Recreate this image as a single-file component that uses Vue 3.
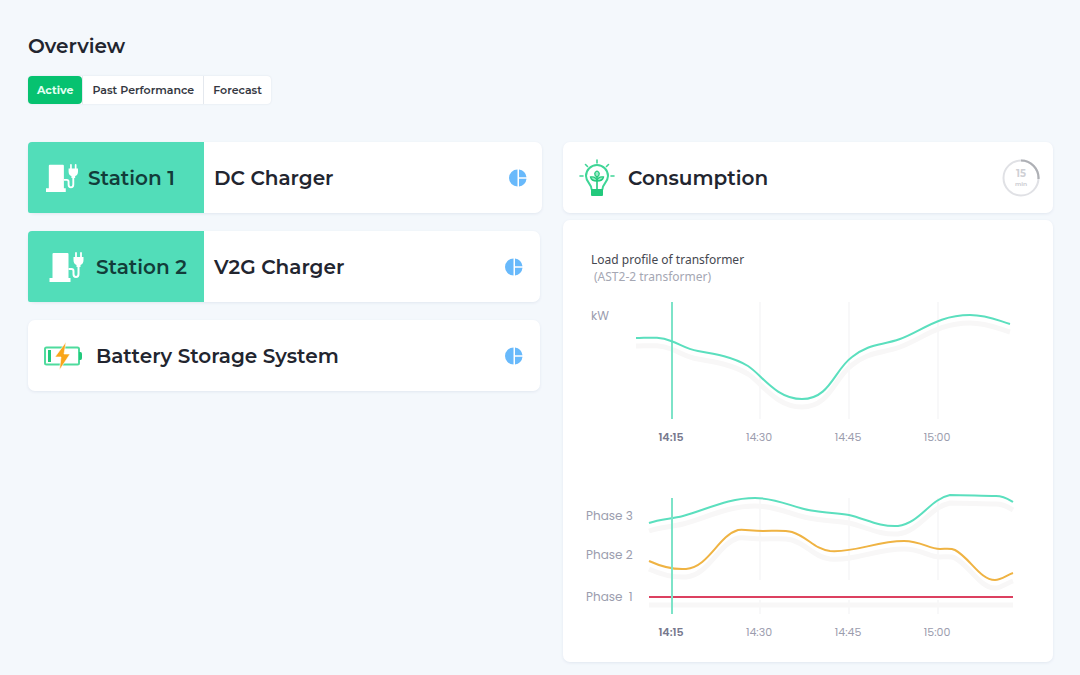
<script setup>
import { ref } from 'vue'

const tabs = ['Active', 'Past Performance', 'Forecast']
const activeTab = ref('Active')

const stations = [
  { tag: 'Station 1', name: 'DC Charger' },
  { tag: 'Station 2', name: 'V2G Charger' },
]

const times = [
  { x: 672, label: '14:15' },
  { x: 760, label: '14:30' },
  { x: 849, label: '14:45' },
  { x: 938, label: '15:00' },
]

const phases = [
  { label: 'Phase 3', y: 520 },
  { label: 'Phase 2', y: 559 },
  { label: 'Phase  1', y: 601 },
]

const loadPath =
  'M636 338 C648 338 658 336 671 341 C680 344 686 349 698 351 C716 354 733 357 748 366 C762 375 776 399 802 399 C830 399 834 370 852 357 C870 343 880 346 900 339 C922 331 938 315 970 315 C988 315 999 321 1010 324'
const curves = [
  { cls: 'teal', d: 'M649 523 C660 519 671 519 683 516 C706 510 727 498 755 498 C780 498 794 509 815 511 C828 513 838 513 849 515 C866 519 879 527 898 526 C920 523 930 499 950 495 C966 495 982 496 996 496 C1004 496 1008 499 1013 502' },
  { cls: 'amber', d: 'M649 561 C660 566 671 570 686 569 C709 567 718 536 738 530 C744 529 751 531 763 531 C775 531 784 530 792 532 C808 537 814 549 830 551 C855 553 876 541 904 541 C921 541 929 549 940 549 C946 549 951 548 955 550 C970 558 980 580 995 580 C1001 580 1007 575 1013 573' },
  { cls: 'red', d: 'M649 597 H1013' },
]
</script>

<template>
  <main class="page">
    <h1>Overview</h1>
    <nav class="tabs" aria-label="Views">
      <button
        v-for="tab in tabs"
        :key="tab"
        type="button"
        :class="{ active: tab === activeTab }"
        @click="activeTab = tab"
      >{{ tab }}</button>
    </nav>

    <div class="columns">
      <section class="list">
        <article v-for="(s, i) in stations" :key="s.tag" class="card row" :class="{ narrow: i > 0 }">
          <div class="tag" :class="{ roomy: i > 0 }">
            <svg class="charger" viewBox="0 0 34 30" aria-hidden="true">
              <path d="M3 2 Q3 1 4 1 H18 Q19 1 19 2 V26 H21 V30 H0 V26 H3 Z" fill="#fff" />
              <path d="M19 17 H22 Q24 17 24 19 V22 Q24 25 26.500 25 Q29 25 29 22 V13" fill="none" stroke="#fff" stroke-width="2" />
              <path d="M24 5 H34 V8 Q34 12 31 13 V15 H27 V13 Q24 12 24 8 Z" fill="#fff" />
              <path d="M26.500 1 V6 M31.500 1 V6" stroke="#fff" stroke-width="1.800" stroke-linecap="round" />
            </svg>
            <span>{{ s.tag }}</span>
          </div>
          <h2>{{ s.name }}</h2>
          <svg class="pie" viewBox="0 0 18 18" aria-hidden="true">
            <path d="M8.500 .5 A8.500 8.500 0 0 0 8.500 17.500 Z M10 .5 V8.300 H17.500 A8.500 8.500 0 0 0 10 .5 Z M10 9.700 V17.500 A8.500 8.500 0 0 0 17.500 9.700 Z" />
          </svg>
        </article>

        <article class="card row narrow battery">
          <svg class="battery-icon" viewBox="0 0 38 28" aria-hidden="true">
            <rect x="1" y="5.500" width="34" height="17" rx="1.500" fill="none" stroke="#4fdb9d" stroke-width="2" />
            <path d="M35 10 H36.500 Q38 10 38 12 V16 Q38 18 36.500 18 H35 Z" fill="#22c97c" />
            <path d="M4 8 H7 V20 H4 Z" fill="#22c97c" />
            <path d="M22 0 L11 15 H17 L15.500 28 L26 12 H20 Z" fill="#f9a51a" stroke="#fff" stroke-width=".6" />
          </svg>
          <h2>Battery Storage System</h2>
          <svg class="pie" viewBox="0 0 18 18" aria-hidden="true">
            <path d="M8.500 .5 A8.500 8.500 0 0 0 8.500 17.500 Z M10 .5 V8.300 H17.500 A8.500 8.500 0 0 0 10 .5 Z M10 9.700 V17.500 A8.500 8.500 0 0 0 17.500 9.700 Z" />
          </svg>
        </article>
      </section>

      <section class="details">
        <header class="card row consumption">
          <svg class="bulb" viewBox="0 0 36 37" aria-hidden="true">
            <g fill="none" stroke="#3ed596" stroke-width="1.600" stroke-linecap="round">
              <path d="M18 1 V4 M6.500 5.500 L8.500 7.500 M29.500 5.500 L27.500 7.500 M1 17 H4 M32 17 H35" />
              <path d="M12.500 30 C12.500 25 7 23 7 17 A11 11 0 0 1 29 17 C29 23 23.500 25 23.500 30" stroke-width="2" />
              <path d="M18 30 V17" stroke="#22c97c" />
            </g>
            <g fill="#9aebc8" stroke="#22c97c" stroke-width="1.300">
              <path d="M18 18 C14.500 16 15.500 13 18 12 C20.500 13 21.500 16 18 18 Z" />
              <path d="M18 22 C14 22 12 20.500 11.500 18 C15 17.500 17.500 19 18 22 C18.500 19 21 17.500 24.500 18 C24 20.500 22 22 18 22 Z" />
            </g>
            <path d="M12 30 H24 V36 Q24 37 23 37 H13 Q12 37 12 36 Z" fill="#22c97c" />
          </svg>
          <h2>Consumption</h2>
          <div class="timer">
            <svg viewBox="0 0 38 38" aria-hidden="true">
              <circle cx="19" cy="19" r="17.500" fill="none" stroke="#e0e1e5" stroke-width="2" />
              <path d="M19 1.500 A17.500 17.500 0 0 1 36.500 20" fill="none" stroke="#aeb0b5" stroke-width="2.200" />
            </svg>
            <span class="amount">15</span>
            <span class="unit">min</span>
          </div>
        </header>

        <div class="card charts">
          <h3>Load profile of transformer</h3>
          <p>(AST2-2 transformer)</p>
          <svg class="chart load" viewBox="563 295 490 155" role="img" aria-label="Load profile in kW">
            <path v-for="t in times.slice(1)" :key="t.x" class="grid" :d="`M${t.x} 302 V419`" />
            <path class="shadow" :d="loadPath" transform="translate(0 8)" />
            <path class="now" d="M672 302 V419" />
            <path class="line teal" :d="loadPath" />
            <text x="591" y="320">kW</text>
            <text v-for="(t, i) in times" :key="t.label" class="time" :class="{ current: i === 0 }" :x="t.x - 1" y="441">{{ t.label }}</text>
          </svg>
          <svg class="chart phases" viewBox="563 485 490 160" role="img" aria-label="Phase profiles">
            <path v-for="t in times.slice(1)" :key="t.x" class="grid" :d="`M${t.x} 498 V580 M${t.x} 600 V614`" />
            <path v-for="c in curves" :key="c.cls" class="shadow" :d="c.d" transform="translate(0 8)" />
            <path v-for="c in curves" :key="c.cls" class="line" :class="c.cls" :d="c.d" />
            <path class="now" d="M672 498 V614" />
            <text v-for="p in phases" :key="p.label" class="phase" x="586" :y="p.y">{{ p.label }}</text>
            <text v-for="(t, i) in times" :key="t.label" class="time" :class="{ current: i === 0 }" :x="t.x - 1" y="636">{{ t.label }}</text>
          </svg>
        </div>
      </section>
    </div>
  </main>
</template>

<style>
body {
  background: #f4f8fc;
}
</style>

<style scoped>
.page {
  box-sizing: border-box;
  padding: 32px 27px 12px 28px;
  font-family: Montserrat, Inter, "Liberation Sans", sans-serif;
  color: #22252f;
}
h1, h2, h3, p {
  margin: 0;
}
h1 {
  font-size: 20px;
  line-height: 28px;
  font-weight: 600;
}
.tabs {
  display: flex;
  width: max-content;
  margin-top: 16px;
  border-radius: 4px;
  background: #fff;
  box-shadow: 0 0 2px #d9dfe8;
}
.tabs button {
  height: 28px;
  padding: 0 9px;
  border: 0;
  border-left: 1px solid #e4e8ee;
  background: none;
  font: 600 11px/28px Montserrat, Inter, "Liberation Sans", sans-serif;
  color: #343741;
  cursor: pointer;
}
.tabs .active {
  border: 0;
  border-radius: 4px;
  background: #06c270;
  color: #e2fff2;
  font-weight: 700;
}
.columns {
  display: grid;
  grid-template-columns: 514fr 490fr;
  gap: 21px;
  margin-top: 38px;
  align-items: start;
}
.list {
  display: grid;
  gap: 18px;
}
.details {
  display: grid;
  gap: 7px;
}
.card {
  background: #fff;
  border-radius: 7px;
  box-shadow: 0 1px 3px #e1e7f0;
}
.row {
  display: flex;
  align-items: center;
  height: 71px;
}
.narrow {
  margin-right: 2px;
}
h2, .tag {
  font-size: 20px;
  line-height: 28px;
  font-weight: 600;
}
.tag {
  box-sizing: border-box;
  display: flex;
  align-items: center;
  gap: 10px;
  width: 176px;
  height: 100%;
  margin-right: 10px;
  padding-left: 18px;
  border-radius: 4px 0 0 2px;
  background: #52ddb9;
  color: #123c3a;
  white-space: nowrap;
}
.tag.roomy {
  gap: 12px;
  padding-left: 21px;
}
.charger {
  width: 32px;
  height: 30px;
}
.roomy .charger {
  width: 35px;
}
.pie {
  width: 18px;
  height: 18px;
  margin-left: auto;
  margin-right: 15px;
  fill: #68b9fb;
}
.narrow .pie {
  margin-right: 17px;
}
.battery {
  gap: 14px;
  padding-left: 16px;
}
.battery-icon {
  width: 38px;
  height: 28px;
}
.consumption {
  gap: 13px;
  padding: 0 13px 0 16px;
}
.bulb {
  width: 36px;
  height: 37px;
}
.timer {
  display: grid;
  justify-items: center;
  align-content: center;
  width: 38px;
  height: 38px;
  margin-left: auto;
  color: #cfd0d5;
}
.timer svg {
  grid-area: 1 / 1 / 3 / 2;
  width: 38px;
  height: 38px;
}
.amount {
  grid-area: 1 / 1;
  align-self: end;
  font-size: 10px;
  line-height: 12px;
  font-weight: 700;
}
.unit {
  grid-area: 2 / 1;
  font-size: 6px;
  line-height: 8px;
  font-weight: 700;
}
.charts {
  padding: 31px 0 17px;
}
h3, p {
  font-family: "Noto Sans", sans-serif;
  font-size: 12px;
  line-height: 17px;
  font-weight: 400;
}
h3 {
  padding-left: 28px;
  color: #454750;
}
p {
  padding-left: 31px;
  color: #a5a7b3;
}
.chart {
  display: block;
  width: 100%;
}
.load {
  margin-top: 10px;
}
.phases {
  margin-top: 35px;
}
.chart text {
  font: 400 12px Poppins, Inter, sans-serif;
  fill: #9b9dae;
  white-space: pre;
}
.chart .time {
  font-size: 11px;
  text-anchor: middle;
}
.chart .current {
  font-weight: 600;
  fill: #77798e;
}
.line, .shadow, .now, .grid {
  fill: none;
}
.line {
  stroke-width: 2;
}
.teal {
  stroke: #5bdfbe;
}
.amber {
  stroke: #efb343;
}
.red {
  stroke: #dc4060;
}
.shadow {
  stroke: #f8f7f7;
  stroke-width: 5;
}
.grid {
  stroke: #f1f1f3;
}
.now {
  stroke: #7de3c8;
  stroke-width: 2;
}
</style>
